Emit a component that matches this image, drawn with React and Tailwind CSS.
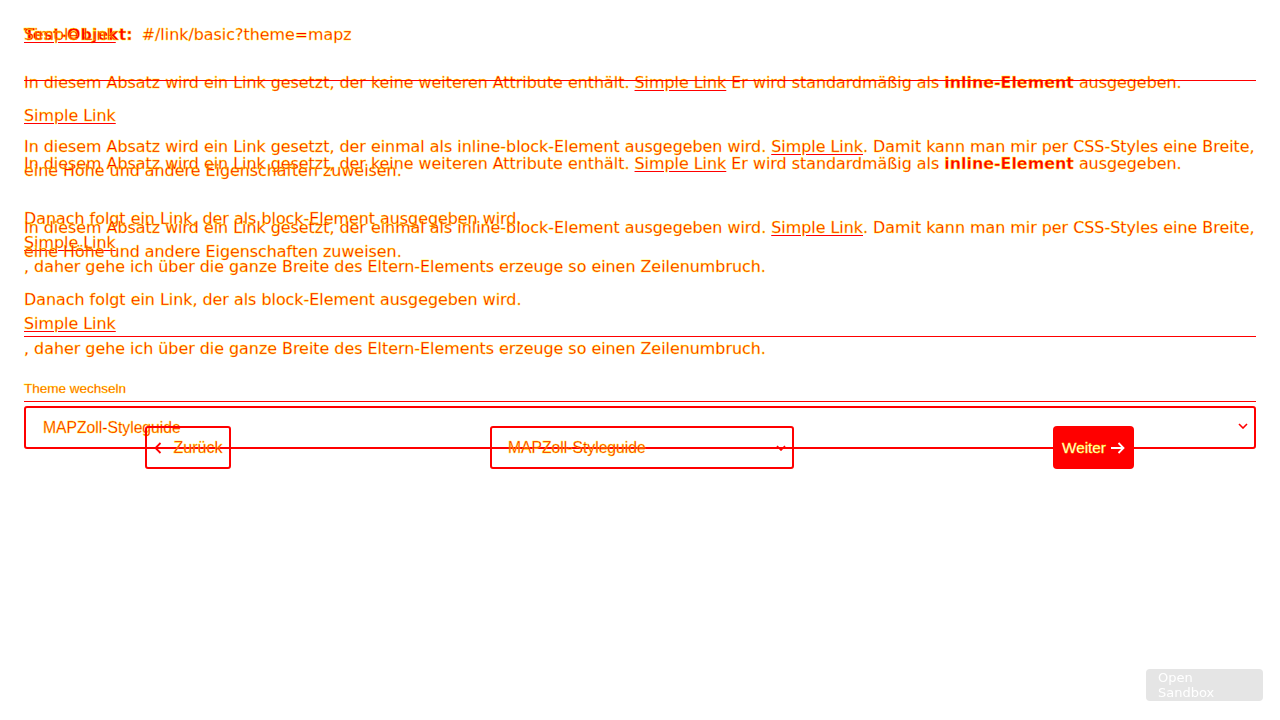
import React from "react";

const ink = "text-[#f00] [-webkit-text-stroke:0.35px_#ff0]";
const sans = "font-['Liberation_Sans',Arial,sans-serif]";

function Chevron({ className }) {
  return (
    <svg width="10" height="6" viewBox="0 0 10 6" className={className}>
      <path d="M1 1l4 4 4-4" fill="none" stroke="#f00" strokeWidth="1.6" />
    </svg>
  );
}

function Arrow({ dir, color }) {
  const d = dir === "left" ? "M14 7H1.5M6.5 2L1.5 7l5 5" : "M1 7h12.5M8.5 2l5 5-5 5";
  return (
    <svg width="15" height="14" viewBox="0 0 15 14" className="shrink-0">
      <path d={d} fill="none" stroke={color} strokeWidth="1.8" />
    </svg>
  );
}

function Link() {
  return <span className="underline decoration-[#f00] underline-offset-2">Simple Link</span>;
}

function LayerA() {
  return (
    <div className="whitespace-nowrap px-6 pt-[23px]">
      <p className="h-6">
        <b>Test-Objekt:</b>
        <span className="ml-[9px]">#/link/basic?theme=mapz</span>
      </p>
      <p className="mt-6">
        In diesem Absatz wird ein Link gesetzt, der keine weiteren Attribute enthält. <Link /> Er wird
        standardmäßig als <b>inline-Element</b> ausgegeben.
      </p>
      <p className="mt-[9px]">
        <Link />
      </p>
      <p className="mt-[7px]">
        In diesem Absatz wird ein Link gesetzt, der einmal als inline-block-Element ausgegeben wird.{" "}
        <Link />. Damit kann man mir per CSS-Styles eine Breite,
        <br />
        eine Höhe und andere Eigenschaften zuweisen.
      </p>
      <p className="mt-6">Danach folgt ein Link, der als block-Element ausgegeben wird.</p>
      <p>
        <Link />
      </p>
      <p>, daher gehe ich über die ganze Breite des Eltern-Elements erzeuge so einen Zeilenumbruch.</p>
      <p className={`mt-[102px] text-[13.5px] leading-4 ${sans}`}>Theme wechseln</p>
      <div className="mt-1 h-px bg-[#f00]" />
      <div className={`mt-1 flex h-[43px] items-center justify-between rounded-[3px] border-2 border-[#f00] pl-[17px] pr-[6px] text-[15.7px] ${sans}`}>
        <span>MAPZoll-Styleguide</span>
        <Chevron className="-mt-[3px]" />
      </div>
    </div>
  );
}

function LayerB() {
  return (
    <div className="whitespace-nowrap px-6 pt-[23px]">
      <p>
        <Link />
      </p>
      <div className="mt-[33px] h-px bg-[#f00]" />
      <p className="mt-[71px]">
        In diesem Absatz wird ein Link gesetzt, der keine weiteren Attribute enthält. <Link /> Er wird
        standardmäßig als <b>inline-Element</b> ausgegeben.
      </p>
      <p className="mt-10">
        In diesem Absatz wird ein Link gesetzt, der einmal als inline-block-Element ausgegeben wird.{" "}
        <Link />. Damit kann man mir per CSS-Styles eine Breite,
        <br />
        eine Höhe und andere Eigenschaften zuweisen.
      </p>
      <p className="mt-6">Danach folgt ein Link, der als block-Element ausgegeben wird.</p>
      <p>
        <Link />
      </p>
      <div className="h-px bg-[#f00]" />
      <p>, daher gehe ich über die ganze Breite des Eltern-Elements erzeuge so einen Zeilenumbruch.</p>
      <div className={`mt-[65px] flex h-[43px] items-stretch text-[16px] ${sans}`}>
        <button className="ml-[121px] flex w-[86px] items-center justify-center gap-[5px] rounded-[3px] border-2 border-[#f00]">
          <Arrow dir="left" color="#f00" />
          <span>Zurück</span>
        </button>
        <div className="ml-[259px] flex w-[304px] items-center justify-between rounded-[3px] border-2 border-[#f00] pl-4 pr-[6px] text-[15.7px]">
          <span>MAPZoll-Styleguide</span>
          <Chevron />
        </div>
        <button className="ml-[259px] flex w-[81px] items-center justify-center gap-1 rounded-[4px] bg-[#f00] text-[15.3px] text-white [-webkit-text-stroke:0.35px_#ff0]">
          <span>Weiter</span>
          <Arrow dir="right" color="#fff" />
        </button>
      </div>
    </div>
  );
}

export default function App() {
  return (
    <div className={`relative min-h-screen bg-white font-['DejaVu_Sans',sans-serif] text-[15.88px] leading-6 ${ink}`}>
      <LayerA />
      <div className="absolute inset-0">
        <LayerB />
      </div>
      <button className="fixed bottom-[19px] right-[17px] w-[117px] rounded-[4px] bg-[#e5e5e5] py-[1px] pl-3 text-left text-[13px] leading-[15px] text-white [-webkit-text-stroke:0px]">
        Open
        <br />
        Sandbox
      </button>
    </div>
  );
}
